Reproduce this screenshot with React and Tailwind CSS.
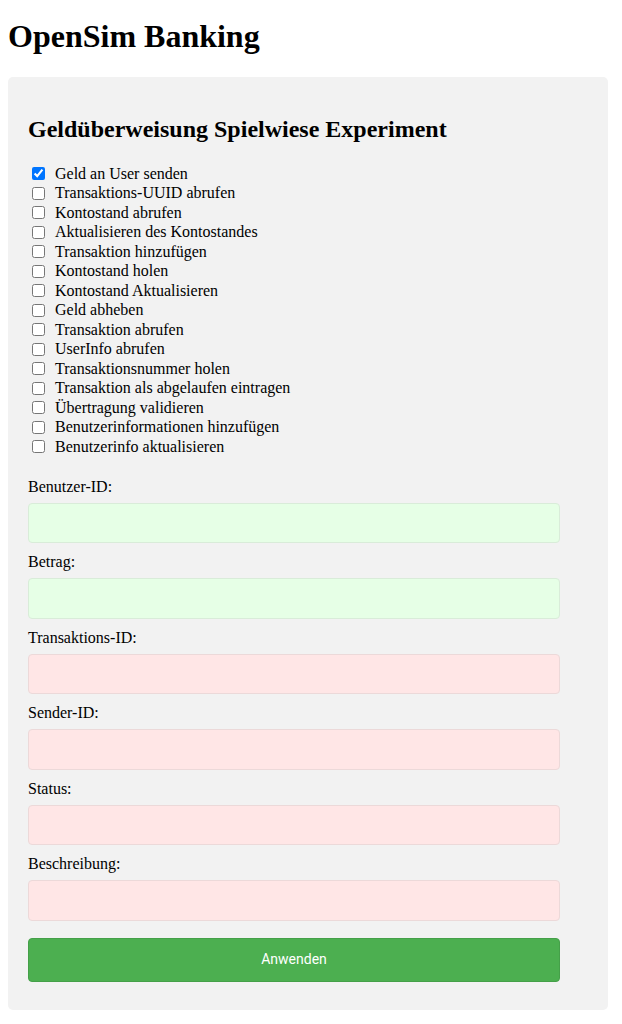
import React from 'react';

const serif = { fontFamily: '"Liberation Serif", "Times New Roman", serif' };

const actions = [
  'Geld an User senden',
  'Transaktions-UUID abrufen',
  'Kontostand abrufen',
  'Aktualisieren des Kontostandes',
  'Transaktion hinzufügen',
  'Kontostand holen',
  'Kontostand Aktualisieren',
  'Geld abheben',
  'Transaktion abrufen',
  'UserInfo abrufen',
  'Transaktionsnummer holen',
  'Transaktion als abgelaufen eintragen',
  'Übertragung validieren',
  'Benutzerinformationen hinzufügen',
  'Benutzerinfo aktualisieren',
];

const fields = [
  { label: 'Benutzer-ID:', ok: true },
  { label: 'Betrag:', ok: true },
  { label: 'Transaktions-ID:', ok: false },
  { label: 'Sender-ID:', ok: false },
  { label: 'Status:', ok: false },
  { label: 'Beschreibung:', ok: false },
];

export default function App() {
  return (
    <div className="min-h-screen bg-white px-[8px] pt-[18px] text-black" style={serif}>
      <h1 className="m-0 h-[37px] text-[32px] font-bold leading-[37px] mb-[22px]">OpenSim Banking</h1>

      <div className="w-[600px] rounded-[5px] bg-[#f2f2f2] px-[20px] pt-[20px] pb-[28px]">
        <h2 className="mt-[18px] mb-[21px] h-[28px] text-[24px] font-bold leading-[28px]">
          Geldüberweisung Spielwiese Experiment
        </h2>

        <div className="flex flex-col">
          {actions.map((a, i) => (
            <label key={a} className="flex h-[19.5px] items-center text-[16px] leading-[18px]">
              <input
                type="checkbox"
                defaultChecked={i === 0}
                className="m-0 ml-[4px] mr-[10px] h-[13px] w-[13px]"
              />
              <span>{a}</span>
            </label>
          ))}
        </div>

        <div className="mt-[21px] flex flex-col">
          {fields.map(f => (
            <div key={f.label} className="mb-[10px] flex flex-col">
              <label className="h-[18px] text-[16px] leading-[18px]">{f.label}</label>
              <input
                type="text"
                className={`mt-[7px] h-[40.6px] w-[532px] rounded-[4px] border px-[10px] outline-none ${
                  f.ok ? 'border-[#d9ecd9] bg-[#e6ffe6]' : 'border-[#ecd9d9] bg-[#ffe6e6]'
                }`}
              />
            </div>
          ))}
        </div>

        <button
          className="mt-[7px] h-[43.6px] w-[532px] rounded-[4px] border border-[#45a049] bg-[#4caf50] text-[14px] text-white"
          style={{ fontFamily: 'Roboto, "Liberation Sans", sans-serif' }}
        >
          Anwenden
        </button>
      </div>
    </div>
  );
}
